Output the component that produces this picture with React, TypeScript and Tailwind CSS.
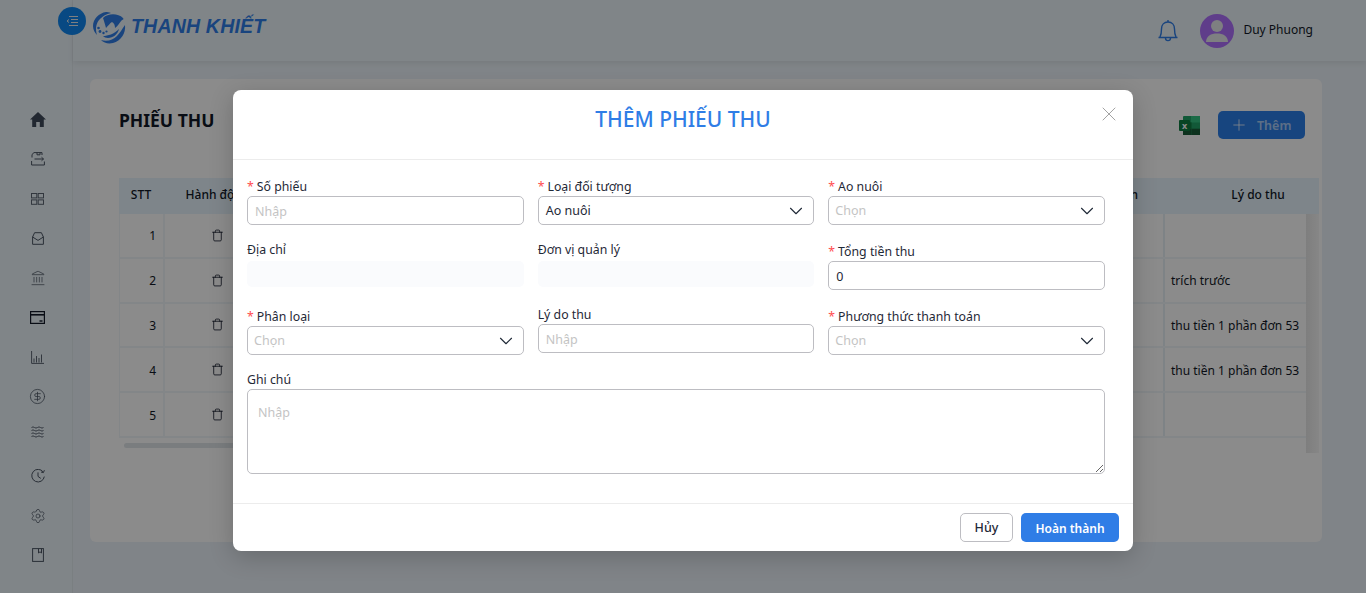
import { ChevronDown, CircleDollarSign, Landmark, Plus, Settings, Trash, X } from "lucide-react";

const rows = [
  { stt: 1, reason: "" },
  { stt: 2, reason: "trích trước" },
  { stt: 3, reason: "thu tiền 1 phần đơn 53" },
  { stt: 4, reason: "thu tiền 1 phần đơn 53" },
  { stt: 5, reason: "" },
];

function HomeIcon() {
  return (
    <svg width="16" height="15" viewBox="0 0 16 15" fill="#3f4a5a">
      <path d="M8 0 L16 7.6 H13.8 V15 H9.8 V10 H6.2 V15 H2.2 V7.6 H0 Z" />
    </svg>
  );
}

function TrayIcon() {
  return (
    <svg width="14" height="14" viewBox="0 0 14 14" fill="none" stroke="#4b5563" strokeWidth="1">
      <path d="M1 5.5 V2.5 L3 .6 H11 V3" />
      <path d="M6 .6 V2.8 H9 V.6" />
      <path d="M3.5 7 H12.5 M10.5 5.2 L12.5 7 L10.5 8.8" />
      <path d="M.6 9 V13 H13.4 V9.5" />
    </svg>
  );
}

function GridIcon() {
  return (
    <svg width="13" height="12" viewBox="0 0 13 12" fill="none" stroke="#5b6472" strokeWidth="1">
      <rect x=".5" y=".5" width="5.3" height="4.4" />
      <rect x="7.2" y=".5" width="5.3" height="4.4" />
      <rect x=".5" y="6.9" width="5.3" height="4.4" />
      <rect x="7.2" y="6.9" width="5.3" height="4.4" />
    </svg>
  );
}

function BoxIcon() {
  return (
    <svg width="12" height="13" viewBox="0 0 12 13" fill="none" stroke="#4b5563" strokeWidth="1">
      <path d="M.6 5 L2.6 .7 H9.4 L11.4 5 V12.3 H.6 Z" />
      <path d="M.6 5 L6 8.4 L11.4 5" />
    </svg>
  );
}

function CardIcon() {
  return (
    <svg width="15" height="13" viewBox="0 0 15 13" fill="none" stroke="#111827" strokeWidth="1.2">
      <rect x=".6" y=".6" width="13.8" height="11.8" />
      <path d="M.6 3.8 H14.4" strokeWidth="1.6" />
      <path d="M9.5 10 H12.5" strokeWidth="1.4" />
    </svg>
  );
}

function ChartIcon() {
  return (
    <svg width="13" height="13" viewBox="0 0 13 13" fill="none" stroke="#5b6472" strokeWidth="1">
      <path d="M.6 0 V12.4 H13" />
      <path d="M3 11.5 V7.5 M5.5 11.5 V5 M8 11.5 V7 M10.5 11.5 V3.5" />
    </svg>
  );
}

function WaveIcon() {
  return (
    <svg width="13" height="12" viewBox="0 0 13 12" fill="none" stroke="#5b6472" strokeWidth="1">
      <path d="M.5 1.5 Q2 .3 3.5 1.5 T6.5 1.5 T9.5 1.5 T12.5 1.5" />
      <path d="M.5 4.5 Q2 3.3 3.5 4.5 T6.5 4.5 T9.5 4.5 T12.5 4.5" />
      <path d="M.5 7.5 Q2 6.3 3.5 7.5 T6.5 7.5 T9.5 7.5 T12.5 7.5" />
      <path d="M.5 10.5 Q2 9.3 3.5 10.5 T6.5 10.5 T9.5 10.5 T12.5 10.5" />
    </svg>
  );
}

function ClockIcon() {
  return (
    <svg width="14" height="14" viewBox="0 0 14 14" fill="none" stroke="#4b5563" strokeWidth="1">
      <path d="M12.2 3 A6.3 6.3 0 1 0 13.3 7.6" />
      <path d="M7 3.4 V7.4 L9.8 9.4" />
      <path d="M13.4 1.2 L12.4 3.6 L10 3" />
    </svg>
  );
}

function BookIcon() {
  return (
    <svg width="12" height="14" viewBox="0 0 12 14" fill="none" stroke="#4b5563" strokeWidth="1">
      <rect x=".6" y=".6" width="10.8" height="12.8" />
      <path d="M6.5 .6 V5 L8 3.8 L9.5 5 V.6" />
    </svg>
  );
}

function Logo() {
  return (
    <svg width="34" height="33" viewBox="0 0 34 33" fill="#2f7de6">
      <path d="M14 1 C7 2 1 8 1 15 C1 19 3 22 5 24 C3 18 4 12 8 8 C11 5 14 3 19 2 C17 1 15 1 14 1 Z" />
      <path d="M11 7 C16 2 26 2 31 7 C32 8 31 9 30 9 C28 11 26 15 23 17 C23 14 22 12 20 11 C18 12 16 15 14 17 C13 13 12 10 11 7 Z" />
      <path d="M33 14 C34 22 29 30 21 32 C16 33 12 32 9 29 C15 31 21 29 25 25 C28 22 30 18 33 14 Z" />
      <path d="M27 18 C26 23 21 27 16 27 C14 27 12 26 11 25 C16 25 22 23 27 18 Z" />
      <circle cx="6.5" cy="17" r="1.3" />
      <circle cx="8" cy="20.5" r="1.4" />
      <circle cx="11.5" cy="22" r="1.2" />
      <circle cx="14.5" cy="20.5" r="1.1" />
    </svg>
  );
}

function ExcelIcon() {
  return (
    <svg width="21" height="19" viewBox="0 0 21 19">
      <rect x="4" y="0" width="17" height="19" rx="1" fill="#21a366" />
      <rect x="12" y="0" width="9" height="6.5" fill="#33c481" />
      <rect x="4" y="6.3" width="8.5" height="6.4" fill="#107c41" />
      <rect x="12.5" y="12.7" width="8.5" height="6.3" fill="#185c37" />
      <rect x="4" y="12.7" width="8.5" height="6.3" fill="#185c37" />
      <rect x="0" y="4" width="11" height="11" rx="1" fill="#107c41" />
      <text x="5.5" y="12.5" textAnchor="middle" fontSize="9" fontWeight="700" fill="#fff">x</text>
    </svg>
  );
}

function UserAvatar() {
  return (
    <div className="w-[34px] h-[34px] rounded-full bg-[#ad6ffc] flex items-center justify-center overflow-hidden">
      <svg width="22" height="23" viewBox="0 0 22 23" fill="#e5e7eb">
        <circle cx="11" cy="7" r="6" />
        <path d="M0 23 C0 17 5 14.5 11 14.5 C17 14.5 22 17 22 23 Z" />
      </svg>
    </div>
  );
}

function Label({ children, required }: { children: React.ReactNode; required?: boolean }) {
  if (required) {
    return (
      <div className="h-[22px] pt-[2px] text-[12.3px] leading-[22px] text-[#1f2937]">
        <span className="text-[#ff4d4f] mr-[3px]">*</span>
        {children}
      </div>
    );
  }
  return <div className="h-5 text-[12.3px] leading-[22px] text-[#1f2937]">{children}</div>;
}

function TextInput({ placeholder, value }: { placeholder?: string; value?: string }) {
  return (
    <input
      readOnly
      value={value}
      placeholder={placeholder}
      className="block w-full h-[29px] px-[7px] pt-[1px] border border-[#bdbdc2] rounded-[5px] text-[12.5px] text-[#1f2937] outline-none placeholder:text-[#c4c4c4]"
    />
  );
}

function SelectBox({ placeholder, value }: { placeholder?: string; value?: string }) {
  return (
    <div className="flex items-center justify-between h-[29px] pl-[7px] pr-[6px] border border-[#bdbdc2] rounded-[5px] text-[12.5px]">
      <span className={value ? "pt-[2px] text-[#1f2937]" : "pt-[2px] -ml-[1px] text-[#c4c4c4]"}>{value ?? placeholder}</span>
      <ChevronDown className="w-[22px] h-[22px] text-[#1f2937]" strokeWidth={1.2} />
    </div>
  );
}

export default function App() {
  return (
    <div className="relative flex h-[593px] overflow-hidden bg-[#e9f1f7] font-['Noto_Sans',sans-serif] text-[#111827]">
      {/* Sidebar */}
      <aside className="w-[73px] shrink-0 border-r border-[#dfe7ec] bg-[#e9f2f8] pt-[100px]">
        <div className="flex flex-col items-center pr-[1px] w-[76px]">
          <SideItem><HomeIcon /></SideItem>
          <SideItem><TrayIcon /></SideItem>
          <SideItem><GridIcon /></SideItem>
          <SideItem><BoxIcon /></SideItem>
          <SideItem><Landmark className="w-[16px] h-[16px] text-[#4b5563]" strokeWidth={1.1} /></SideItem>
          <SideItem><CardIcon /></SideItem>
          <SideItem><ChartIcon /></SideItem>
          <SideItem><CircleDollarSign className="w-[17px] h-[17px] text-[#4b5563]" strokeWidth={1.1} /></SideItem>
          <div className="flex items-center justify-center h-[40px] -mt-[5px]">
            <WaveIcon />
          </div>
          <div className="flex items-center justify-center h-[40px] mt-[4px]">
            <ClockIcon />
          </div>
          <SideItem><Settings className="w-[16px] h-[16px] text-[#4b5563]" strokeWidth={1.1} /></SideItem>
          <SideItem><BookIcon /></SideItem>
        </div>
      </aside>

      <div className="flex-1 min-w-0 flex flex-col">
        {/* Header */}
        <header className="relative flex items-center justify-between h-[61px] shrink-0 pl-[19px] pr-[53px] bg-[#e9f2f8] shadow-[0_2px_6px_rgba(0,0,0,0.08)]">
          <button className="absolute -left-[15px] top-[7px] w-[28px] h-[28px] rounded-full bg-[#0f86ee] flex items-center justify-center">
            <svg width="12" height="10" viewBox="0 0 12 10" fill="none" stroke="#e5e7eb" strokeWidth="1">
              <path d="M3 .5 H12 M5 3.5 H12 M5 6.5 H12 M3 9.5 H12" />
              <path d="M3 3.5 L1 5 L3 6.5" />
            </svg>
          </button>
          <div className="flex items-center gap-[5px] -mt-[7px]">
            <Logo />
            <span className="font-['Liberation_Sans',sans-serif] text-[19.5px] font-bold italic text-[#2f7de6] tracking-[0.2px]">THANH KHIẾT</span>
          </div>
          <div className="flex items-center">
            <svg width="22" height="24" viewBox="0 0 22 24" fill="none" stroke="#2f7de6" strokeWidth="1.4" className="mr-[21px]">
              <path d="M3 18 C4 16 4.5 14 4.5 10 C4.5 6 7 3 11 3 C15 3 17.5 6 17.5 10 C17.5 14 18 16 19 18 M1.5 18.5 H20.5" />
              <path d="M11 1 V3" />
              <path d="M8.5 19 C8.5 22.5 13.5 22.5 13.5 19" />
            </svg>
            <UserAvatar />
            <span className="ml-[9px] -mt-[2px] text-[12px]">Duy Phuong</span>
          </div>
        </header>

        {/* Main */}
        <main className="flex-1 min-h-0 pt-[18px] pl-[17px] pr-[44px] pb-[51px]">
          <div className="h-full rounded-[6px] bg-[#fdfdfd] pl-[29px] pr-[3px]">
            <div className="flex items-center justify-between h-[99px] pb-[7px] pr-[14px]">
              <h1 className="-mt-[10px] text-[17.5px] font-bold">PHIẾU THU</h1>
              <div className="flex items-center gap-[18px]">
                <ExcelIcon />
                <button className="flex items-center w-[87px] h-[28px] pl-[12px] pt-[2px] rounded-[5px] bg-[#2b7fe8] text-[12.5px] font-semibold text-white/60">
                  <Plus className="w-[18px] h-[18px] -mt-[2px] text-white mr-[9px]" strokeWidth={1} />
                  Thêm
                </button>
              </div>
            </div>

            {/* Table */}
            <div className="w-[1200px] text-[12px]">
              <div className="flex items-center h-[36px] pb-[3px] bg-[#e6f3fb] font-medium">
                <div className="w-[46px] text-center pr-[2px]">STT</div>
                <div className="w-[104px] text-center pl-[1px]">Hành động</div>
                <div className="flex-1 text-right pr-[26px]">Tổng tiền</div>
                <div className="w-[155px] text-center pl-[33px]">Lý do thu</div>
              </div>
              <div className="relative pr-[13px]">
                {rows.map((r) => (
                  <div key={r.stt} className="flex h-[44.8px] border-b-2 border-[#eef4f8]">
                    <div className="flex items-center justify-end w-[44px] pr-[7px] pt-[2px] border-l border-[#eef4f8]">{r.stt}</div>
                    <div className="flex items-center justify-center w-[106px] border-l-2 border-[#eef4f8]">
                      <Trash className="w-[13px] h-[13px]" strokeWidth={1.5} />
                    </div>
                    <div className="flex-1" />
                    <div className="flex items-center w-[143px] pl-[6px] pt-[2px] border-l-2 border-[#e6eef4] whitespace-nowrap">{r.reason}</div>
                  </div>
                ))}
                <div className="absolute right-0 top-0 w-[13px] h-[239px] bg-gradient-to-r from-[#e6e6e6] to-[#f5f5f5]" />
              </div>
              <div className="mt-[5px] ml-[5px] w-[700px] h-[5px] rounded-full bg-[#dfe3e7]" />
            </div>
          </div>
        </main>
      </div>

      {/* Dialog */}
      <div className="absolute inset-0 bg-black/45">
        <div className="absolute left-[233px] top-[90px] w-[900px] h-[461px] flex flex-col rounded-[8px] bg-white shadow-[0_6px_24px_rgba(0,0,0,0.2)]">
          <div className="relative flex items-center justify-center h-[70px] shrink-0 border-b border-[#ececec] pb-[10px]">
            <h2 className="text-[21px] font-medium text-[#2f7de6]">THÊM PHIẾU THU</h2>
            <X className="absolute right-[12px] top-[12px] w-[24px] h-[24px] text-[#a3a3a3]" strokeWidth={1} />
          </div>

          <div className="flex-1 min-h-0 px-[14px] pr-[28px] pt-[14px]">
            <div className="grid grid-cols-3 gap-x-[14px] gap-y-[14px] items-start">
              <div>
                <Label required>Số phiếu</Label>
                <TextInput placeholder="Nhập" />
              </div>
              <div>
                <Label required>Loại đối tượng</Label>
                <SelectBox value="Ao nuôi" />
              </div>
              <div>
                <Label required>Ao nuôi</Label>
                <SelectBox placeholder="Chọn" />
              </div>

              <div>
                <Label>Địa chỉ</Label>
                <div className="h-[26px] mt-[2px] rounded-[5px] bg-[#fafbfd]" />
              </div>
              <div>
                <Label>Đơn vị quản lý</Label>
                <div className="h-[26px] mt-[2px] rounded-[5px] bg-[#fafbfd]" />
              </div>
              <div>
                <Label required>Tổng tiền thu</Label>
                <TextInput value="0" />
              </div>

              <div>
                <Label required>Phân loại</Label>
                <SelectBox placeholder="Chọn" />
              </div>
              <div>
                <Label>Lý do thu</Label>
                <TextInput placeholder="Nhập" />
              </div>
              <div>
                <Label required>Phương thức thanh toán</Label>
                <SelectBox placeholder="Chọn" />
              </div>

              <div className="col-span-3">
                <Label>Ghi chú</Label>
                <textarea
                  readOnly
                  placeholder="Nhập"
                  className="block w-full h-[85px] px-[10px] py-[14px] border border-[#bdbdc2] rounded-[5px] text-[12.5px] outline-none placeholder:text-[#c4c4c4]"
                />
              </div>
            </div>
          </div>

          <div className="flex items-center justify-end gap-[8px] h-[48px] shrink-0 border-t border-[#ececec] pr-[14px]">
            <button className="w-[53px] h-[29px] pt-[2px] rounded-[5px] border border-[#bdbdc2] text-[12.5px] font-medium text-[#1f2937]">Hủy</button>
            <button className="w-[98px] h-[29px] pt-[2px] rounded-[5px] bg-[#2f7de6] text-[12px] font-semibold text-white">Hoàn thành</button>
          </div>
        </div>
      </div>
    </div>
  );
}

function SideItem({ children }: { children: React.ReactNode }) {
  return <div className="flex items-center justify-center h-[39.6px]">{children}</div>;
}
